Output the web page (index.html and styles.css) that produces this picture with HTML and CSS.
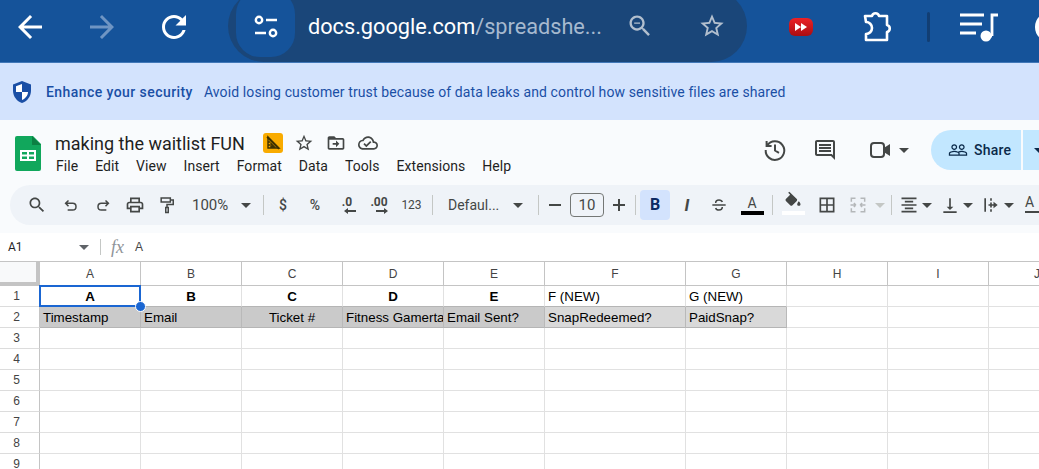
FILE: index.html
```html
<!DOCTYPE html>
<html lang="en">
<head>
    <meta charset="UTF-8">
    <meta name="viewport" content="width=device-width, initial-scale=1.0">
    <title>making the waitlist FUN</title>
    <link rel="stylesheet" href="styles.css">
</head>
<body>
    <!-- Browser bar -->
    <div class="browser-bar">
        <svg class="nav-icon" viewBox="0 0 24 24"><path d="M20 11H7.83l5.59-5.59L12 4l-8 8 8 8 1.41-1.41L7.83 13H20v-2z"/></svg>
        <svg class="nav-icon nav-off" viewBox="0 0 24 24"><path d="M12 4l-1.41 1.41L16.17 11H4v2h12.17l-5.58 5.59L12 20l8-8z"/></svg>
        <svg class="nav-icon" viewBox="0 0 24 24"><path d="M17.65 6.35C16.2 4.9 14.21 4 12 4c-4.42 0-7.99 3.58-7.99 8s3.57 8 7.99 8c3.73 0 6.84-2.55 7.73-6h-2.08c-.82 2.33-3.04 4-5.65 4-3.31 0-6-2.69-6-6s2.69-6 6-6c1.66 0 3.14.69 4.22 1.78L13 11h7V4l-2.35 2.35z"/></svg>
        <div class="omnibox">
            <div class="site-chip">
                <svg width="28" height="28" viewBox="0 0 28 28" fill="none" stroke="#fff" stroke-width="2.4"><circle cx="7" cy="7" r="3.2"/><path d="M14 7h11M3 20h11"/><circle cx="21" cy="20" r="3.2"/></svg>
            </div>
            <div class="url"><span class="url-host">docs.google.com</span>/spreadshe...</div>
            <svg class="omni-icon zoom-out" viewBox="0 0 24 24"><path d="M15.5 14h-.79l-.28-.27C15.41 12.59 16 11.11 16 9.5 16 5.91 13.09 3 9.5 3S3 5.91 3 9.5 5.91 16 9.5 16c1.61 0 3.09-.59 4.23-1.57l.27.28v.79l5 4.99L20.49 19l-4.99-5zm-6 0C7.01 14 5 11.99 5 9.5S7.01 5 9.5 5 14 7.01 14 9.5 11.99 14 9.5 14zM7 9h5v1H7z"/></svg>
            <svg class="omni-icon" viewBox="0 0 24 24"><path d="M22 9.24l-7.19-.62L12 2 9.19 8.63 2 9.24l5.46 4.73L5.82 21 12 17.27 18.18 21l-1.63-7.03L22 9.24zM12 15.4l-3.76 2.27 1-4.28-3.32-2.88 4.38-.38L12 6.1l1.71 4.04 4.38.38-3.32 2.88 1 4.28L12 15.4z"/></svg>
        </div>
        <div class="ext-ff">
            <svg width="12" height="8" viewBox="0 0 12 8" fill="#fff"><path d="M0 0l6 4-6 4zM6 0l6 4-6 4z"/></svg>
        </div>
        <svg class="ext-puzzle" width="32" height="32" viewBox="0 0 32 32" fill="none" stroke="#fff" stroke-width="2.6" stroke-linejoin="round"><path d="M5 5h7a3.6 3.6 0 0 1 7 0h8v9a3.6 3.6 0 0 1 0 7v8H6v-6a4.5 4.5 0 0 0 0-12z"/></svg>
        <div class="bar-divider"></div>
        <svg class="ext-music" width="38" height="30" viewBox="0 0 38 30" fill="none" stroke="#fff" stroke-width="2.8"><path d="M0 3h24M0 12h22M0 21h16M32 24V3h6"/><circle cx="26" cy="24" r="5.5" fill="#fff" stroke="none"/><path d="M28 24h4" /></svg>
        <div class="avatar"></div>
    </div>

    <!-- Security banner -->
    <div class="banner">
        <svg width="20" height="22" viewBox="0 0 20 22"><path fill="#1a4fa5" d="M10 0L1 3.5v6.2C1 15.2 4.8 20.4 10 22c5.2-1.6 9-6.8 9-12.3V3.5z"/><path fill="#fff" d="M10 3L4 5.3V11h6zM10 11v8c3.3-1.3 6-4.5 6-8z"/></svg>
        <span class="banner-title">Enhance your security</span>
        <span class="banner-text">Avoid losing customer trust because of data leaks and control how sensitive files are shared</span>
    </div>

    <!-- Docs header -->
    <div class="doc-head">
        <svg class="sheets-logo" width="26" height="35" viewBox="0 0 26 35"><path fill="#11a75c" d="M2 0h16l8 8v25a2 2 0 0 1-2 2H2a2 2 0 0 1-2-2V2a2 2 0 0 1 2-2z"/><path fill="#0c8043" d="M17 0l9 9h-9z"/><path fill="#fff" d="M5 14h16v11H5zm2 2v2.5h5V16zm7 0v2.5h5V16zm-7 4.5V23h5v-2.5zm7 0V23h5v-2.5z" fill-rule="evenodd"/></svg>
        <div class="doc-titles">
            <div class="title-row">
                <span class="doc-title">making the waitlist FUN</span>
                <span class="badge">
                    <svg width="16" height="16" viewBox="0 0 16 16" fill="none" stroke="#3c3000" stroke-width="1.4"><path d="M3 2v11h11zM3 7h2M3 10h2M6 8.5v3h3z"/><path d="M2 2l12 12" stroke-width="1.6"/></svg>
                </span>
                <svg class="head-icon" viewBox="0 0 24 24"><path d="M22 9.24l-7.19-.62L12 2 9.19 8.63 2 9.24l5.46 4.73L5.82 21 12 17.27 18.18 21l-1.63-7.03L22 9.24zM12 15.4l-3.76 2.27 1-4.28-3.32-2.88 4.38-.38L12 6.1l1.71 4.04 4.38.38-3.32 2.88 1 4.28L12 15.4z"/></svg>
                <svg class="head-icon" viewBox="0 0 24 24"><path d="M20 6h-8l-2-2H4c-1.1 0-2 .9-2 2v12c0 1.1.9 2 2 2h16c1.1 0 2-.9 2-2V8c0-1.1-.9-2-2-2zm0 12H4V8h16v10z"/><path d="M12 9l4 4-4 4v-3H8v-2h4z"/></svg>
                <svg class="head-icon" viewBox="0 0 24 24"><path d="M19.35 10.04C18.67 6.59 15.64 4 12 4 9.11 4 6.6 5.64 5.35 8.04 2.34 8.36 0 10.91 0 14c0 3.31 2.69 6 6 6h13c2.76 0 5-2.24 5-5 0-2.64-2.05-4.78-4.65-4.96zM19 18H6c-2.21 0-4-1.79-4-4 0-2.05 1.53-3.76 3.56-3.97l1.07-.11.5-.95C8.08 7.14 9.94 6 12 6c2.62 0 4.88 1.86 5.39 4.43l.3 1.5 1.53.11c1.56.1 2.78 1.41 2.78 2.96 0 1.65-1.35 3-3 3zm-9-3.82l-2.09-2.09L6.5 13.5 10 17l6.01-6.01-1.41-1.41z"/></svg>
            </div>
            <div class="menu">
                <span>File</span><span>Edit</span><span>View</span><span>Insert</span><span>Format</span><span>Data</span><span>Tools</span><span>Extensions</span><span>Help</span>
            </div>
        </div>
        <div class="head-actions">
            <svg class="action-icon stroke-icon" viewBox="0 0 24 24"><path d="M4.2 7.500A9.300 9.300 0 1 1 2.700 12M3.600 3v5h5M12 6.500v6l4 2.300"/></svg>
            <svg class="action-icon comment-icon" viewBox="0 0 24 24"><path d="M21.99 4c0-1.1-.89-2-1.99-2H4c-1.1 0-2 .9-2 2v12c0 1.1.9 2 2 2h14l4 4-.01-18zM20 4v13.17L18.83 16H4V4h16zM6 12h12v2H6zm0-3h12v2H6zm0-3h12v2H6z"/></svg>
            <svg class="action-icon meet-icon" viewBox="0 0 24 24"><rect class="meet-body" x="3" y="5" width="13" height="14" rx="3"/><path d="M15 10.500L22 6v12l-7-4.500z"/></svg>
            <span class="caret meet-caret"></span>
            <div class="share">
                <div class="share-main">
                    <svg width="20" height="20" viewBox="0 0 24 24" fill="#0b2a4a"><path d="M16.5 13c-1.2 0-3.07.34-4.5 1-1.43-.67-3.3-1-4.5-1C5.33 13 1 14.08 1 16.25V19h22v-2.75c0-2.17-4.33-3.25-6.5-3.25zm-4 4.5h-10v-1.25c0-.54 2.56-1.75 5-1.75s5 1.21 5 1.75v1.25zm9 0H14v-1.25c0-.46-.2-.86-.52-1.22.88-.3 1.96-.53 3.02-.53 2.44 0 5 1.21 5 1.75v1.25zM7.5 12c1.93 0 3.5-1.57 3.5-3.5S9.43 5 7.5 5 4 6.57 4 8.5 5.57 12 7.5 12zm0-5.500c1.100 0 2 .9 2 2s-.9 2-2 2-2-.9-2-2 .9-2 2-2zm9 5.500c1.930 0 3.500-1.570 3.500-3.500S18.430 5 16.500 5 13 6.570 13 8.500s1.570 3.500 3.500 3.500zm0-5.500c1.100 0 2 .9 2 2s-.9 2-2 2-2-.9-2-2 .9-2 2-2z"/></svg>
                    <span>Share</span>
                </div>
                <div class="share-more"><span class="caret caret-dark"></span></div>
            </div>
        </div>
    </div>

    <!-- Toolbar -->
    <div class="toolbar-wrap">
        <div class="toolbar">
            <div class="tb tb-search"><svg viewBox="0 0 24 24"><path d="M15.5 14h-.79l-.28-.27C15.41 12.59 16 11.11 16 9.5 16 5.91 13.09 3 9.5 3S3 5.91 3 9.5 5.91 16 9.5 16c1.61 0 3.09-.59 4.23-1.57l.27.28v.79l5 4.99L20.49 19l-4.99-5zm-6 0C7.01 14 5 11.99 5 9.5S7.01 5 9.5 5 14 7.01 14 9.5 11.99 14 9.5 14z"/></svg></div>
            <div class="tb"><svg viewBox="0 0 24 24" class="line"><path d="M9 6.5L5.5 10 9 13.5M6 10h8a4 4 0 0 1 0 8H8"/></svg></div>
            <div class="tb"><svg viewBox="0 0 24 24" class="line"><path d="M15 6.5l3.5 3.5-3.5 3.5M18 10h-8a4 4 0 0 0 0 8h6"/></svg></div>
            <div class="tb"><svg viewBox="0 0 24 24"><path d="M19 8h-1V3H6v5H5c-1.66 0-3 1.34-3 3v6h4v4h12v-4h4v-6c0-1.66-1.34-3-3-3zM8 5h8v3H8V5zm8 14H8v-4h8v4zm2-4v-2H6v2H4v-4c0-.55.45-1 1-1h14c.55 0 1 .45 1 1v4h-2z"/></svg></div>
            <div class="tb"><svg viewBox="0 0 24 24" class="line"><path d="M5 3.5h11v5H5zM16 6h3.5v5.5H12V15M10.5 15h3v6h-3z"/></svg></div>
            <div class="tb-select tb-zoom"><span>100%</span><span class="caret"></span></div>
            <div class="sep sep-zoom"></div>
            <div class="tb tb-text">$</div>
            <div class="tb tb-text">%</div>
            <div class="tb tb-decimal"><span>.0</span><svg width="12" height="6" viewBox="0 0 12 6"><path d="M4 0L0 3l4 3V4h8V2H4z"/></svg></div>
            <div class="tb tb-decimal"><span>.00</span><svg width="12" height="6" viewBox="0 0 12 6"><path d="M8 0l4 3-4 3V4H0V2h8z"/></svg></div>
            <div class="tb tb-text tb-small">123</div>
            <div class="sep"></div>
            <div class="tb-select tb-font"><span>Defaul...</span><span class="caret"></span></div>
            <div class="sep"></div>
            <div class="tb-step"><svg width="12" height="12" viewBox="0 0 12 12"><path d="M0 5h12v2H0z"/></svg></div>
            <div class="size-box">10</div>
            <div class="tb-step"><svg width="12" height="12" viewBox="0 0 12 12"><path d="M5 0h2v5h5v2H7v5H5V7H0V5h5z"/></svg></div>
            <div class="sep"></div>
            <div class="tb-bold">B</div>
            <div class="tb tb-italic">I</div>
            <div class="tb"><svg viewBox="0 0 24 24" class="line"><path d="M4 12h16M8 9.5C8 7 10 6 12 6s3.5.8 4 2.5M16 14.5c0 2.5-2 3.5-4 3.5s-3.5-.8-4-2.5"/></svg></div>
            <div class="tb tb-letter tb-color"><span>A</span><i class="swatch swatch-black"></i></div>
            <div class="sep"></div>
            <div class="tb tb-letter tb-fill"><svg width="18" height="16" viewBox="0 0 24 20"><path d="M16.56 8.94L7.62 0 6.21 1.41l2.38 2.38-5.15 5.15c-.59.59-.59 1.54 0 2.12l5.5 5.5c.29.29.68.44 1.06.44s.77-.15 1.06-.44l5.5-5.5c.59-.58.59-1.53 0-2.12z"/><path d="M19 11.5s-2 2.17-2 3.5c0 1.1.9 2 2 2s2-.9 2-2c0-1.33-2-3.5-2-3.5z"/></svg><i class="swatch swatch-white"></i></div>
            <div class="tb tb-borders"><svg viewBox="0 0 24 24"><path d="M3 3v18h18V3H3zm8 16H5v-6h6v6zm0-8H5V5h6v6zm8 8h-6v-6h6v6zm0-8h-6V5h6v6z"/></svg></div>
            <div class="tb tb-merge"><svg viewBox="0 0 24 24" fill="none"><path d="M4 8V4h5M4 16v4h5M20 8V4h-5M20 16v4h-5M3 12h6M9.5 12L7 9.5M9.5 12L7 14.5M21 12h-6M14.5 12L17 9.5M14.5 12l2.5 2.5"/></svg></div>
            <span class="caret caret-off"></span>
            <div class="sep"></div>
            <div class="tb-pick">
                <svg viewBox="0 0 24 24"><path d="M7 15v2h10v-2H7zm-4 6h18v-2H3v2zm0-8h18v-2H3v2zm4-6v2h10V7H7zM3 3v2h18V3H3z"/></svg>
                <span class="caret"></span>
            </div>
            <div class="tb-pick">
                <svg viewBox="0 0 24 24"><path d="M11 4h2v10h3l-4 4-4-4h3zM4 19.5h16v2H4z"/></svg>
                <span class="caret"></span>
            </div>
            <div class="tb-pick">
                <svg viewBox="0 0 24 24"><path d="M4 4h2v16H4zM11 4h2v3h-2zM11 9h2v2h-2zM11 13h2v2h-2zM11 17h2v3h-2zM15 8l5 4-5 4v-3H9v-2h6z"/></svg>
                <span class="caret"></span>
            </div>
            <div class="tb-rotate"><span>A</span><svg width="20" height="6" viewBox="0 0 20 6"><path d="M0 2h15V0l5 3-5 3V4H0z"/></svg></div>
        </div>
    </div>

    <!-- Formula bar -->
    <div class="formula-bar">
        <span class="name-box">A1</span>
        <span class="caret name-caret"></span>
        <div class="formula-sep"></div>
        <span class="fx">fx</span>
        <span class="formula-value">A</span>
    </div>

    <!-- Sheet grid -->
    <div class="sheet">
        <table>
            <colgroup>
                <col class="col-rows"><col><col><col><col><col><col class="col-wide"><col><col><col><col>
            </colgroup>
            <tr class="col-heads">
                <th class="corner"></th><th>A</th><th>B</th><th>C</th><th>D</th><th>E</th><th>F</th><th>G</th><th>H</th><th>I</th><th>J</th>
            </tr>
            <tr class="row-one">
                <th>1</th>
                <td class="head-cell selected">A<div class="sel-box"></div><div class="sel-handle"></div></td>
                <td class="head-cell">B</td>
                <td class="head-cell">C</td>
                <td class="head-cell">D</td>
                <td class="head-cell">E</td>
                <td class="edge">F (NEW)</td>
                <td class="edge">G (NEW)</td>
                <td></td><td></td><td></td>
            </tr>
            <tr class="row-two">
                <th>2</th>
                <td class="dark">Timestamp</td>
                <td class="dark">Email</td>
                <td class="dark center">Ticket #</td>
                <td class="dark tight">Fitness Gamerta</td>
                <td class="dark">Email Sent?</td>
                <td class="light">SnapRedeemed?</td>
                <td class="light">PaidSnap?</td>
                <td></td><td></td><td></td>
            </tr>
            <tr><th>3</th><td></td><td></td><td></td><td></td><td></td><td></td><td></td><td></td><td></td><td></td></tr>
            <tr><th>4</th><td></td><td></td><td></td><td></td><td></td><td></td><td></td><td></td><td></td><td></td></tr>
            <tr><th>5</th><td></td><td></td><td></td><td></td><td></td><td></td><td></td><td></td><td></td><td></td></tr>
            <tr><th>6</th><td></td><td></td><td></td><td></td><td></td><td></td><td></td><td></td><td></td><td></td></tr>
            <tr><th>7</th><td></td><td></td><td></td><td></td><td></td><td></td><td></td><td></td><td></td><td></td></tr>
            <tr><th>8</th><td></td><td></td><td></td><td></td><td></td><td></td><td></td><td></td><td></td><td></td></tr>
            <tr><th>9</th><td></td><td></td><td></td><td></td><td></td><td></td><td></td><td></td><td></td><td></td></tr>
        </table>
    </div>
</body>
</html>
```

FILE: styles.css
```css
* {
    box-sizing: border-box;
}

html, body {
    height: 100%;
}

body {
    margin: 0;
    overflow: hidden;
    background-color: #fff;
    font-family: Roboto, "Liberation Sans", sans-serif;
    color: #444746;
}

svg {
    flex: none;
    display: block;
}

.caret {
    flex: none;
    width: 0;
    height: 0;
    border-left: 5px solid transparent;
    border-right: 5px solid transparent;
    border-top: 5px solid #444746;
}

/* Browser bar */
.browser-bar {
    display: flex;
    align-items: center;
    gap: 36px;
    height: 63px;
    padding-left: 12px;
    background-color: #15539a;
    border-bottom: 1px solid #4178b8;
    overflow: hidden;
}

.nav-icon {
    width: 36px;
    height: 36px;
    margin-top: -9px;
    fill: #fff;
}

.nav-off {
    fill: #6f95c3;
}

.omnibox {
    flex: none;
    align-self: flex-start;
    display: flex;
    align-items: center;
    width: 519px;
    height: 72px;
    margin-top: -10px;
    padding-left: 8px;
    border-radius: 36px;
    background-color: #1a4679;
}

.site-chip {
    flex: none;
    display: flex;
    justify-content: center;
    align-items: center;
    align-self: flex-start;
    width: 59px;
    height: 67px;
    padding-top: 6px;
    border-radius: 24px;
    background-color: #15539a;
}

.url {
    flex: none;
    width: 318px;
    margin-left: 13px;
    font-size: 21.7px;
    color: #a6b9cf;
    white-space: nowrap;
}

.url-host {
    color: #fff;
}

.omni-icon {
    width: 28px;
    height: 28px;
    fill: #b2bfce;
}

.zoom-out {
    margin-right: 44px;
}

.ext-ff {
    flex: none;
    display: flex;
    justify-content: center;
    align-items: center;
    width: 24px;
    height: 18px;
    margin-left: 6px;
    margin-top: -9px;
    border-radius: 6px;
    background: linear-gradient(#ec2126, #a90d12);
}

.ext-puzzle {
    margin-left: 11px;
    margin-top: -9px;
}

.bar-divider {
    flex: none;
    width: 3px;
    height: 30px;
    margin-left: -1px;
    margin-top: -9px;
    border-radius: 2px;
    background-color: #123e73;
}

.ext-music {
    margin-left: -6px;
    margin-top: -9px;
}

.avatar {
    flex: none;
    width: 30px;
    height: 30px;
    margin-left: 1px;
    margin-top: -9px;
    border-radius: 50%;
    background-color: #fff;
}

/* Security banner */
.banner {
    display: flex;
    align-items: center;
    height: 57px;
    padding-left: 12px;
    background-color: #d3e3fd;
    font-size: 14px;
    color: #1a4fa5;
}

.banner-title {
    margin-left: 14px;
    font-weight: 500;
    letter-spacing: 0.43px;
}

.banner-text {
    margin-left: 11px;
    letter-spacing: 0.11px;
}

/* Docs header */
.doc-head {
    display: flex;
    height: 65px;
    padding: 16px 0 0 15px;
    background-color: #f9fbfd;
}

.doc-titles {
    margin-left: 14px;
    margin-top: -5px;
}

.title-row {
    display: flex;
    align-items: center;
    height: 24px;
}

.doc-title {
    font-size: 18px;
    color: #1f1f1f;
}

.badge {
    display: flex;
    justify-content: center;
    align-items: center;
    width: 20px;
    height: 20px;
    margin-left: 18px;
    margin-right: 11px;
    border-radius: 3px;
    background-color: #f9ab00;
}

.head-icon {
    width: 20px;
    height: 20px;
    margin-right: 12px;
    fill: #444746;
}

.menu {
    display: flex;
    gap: 17px;
    margin-top: 3px;
    margin-left: 1px;
    font-size: 14px;
    letter-spacing: 0.05px;
    color: #1f1f1f;
}

.head-actions {
    display: flex;
    align-items: center;
    align-self: flex-start;
    height: 40px;
    margin-left: auto;
    margin-top: -6px;
}

.action-icon {
    width: 24px;
    height: 24px;
    margin-right: 26px;
    fill: #444746;
}

.stroke-icon {
    fill: none;
    stroke: #444746;
    stroke-width: 2;
}

.comment-icon {
    margin-right: 31px;
}

.meet-icon {
    margin-right: 7px;
}

.meet-body {
    fill: none;
    stroke: #444746;
    stroke-width: 2;
}

.meet-caret {
    margin-right: 22px;
}

.share {
    flex: none;
    display: flex;
    gap: 2px;
    width: 108px;
    height: 40px;
    font-size: 14px;
    font-weight: 500;
    letter-spacing: 0.2px;
    color: #0b2a4a;
}

.share-main {
    flex: none;
    display: flex;
    align-items: center;
    gap: 6px;
    width: 90px;
    padding-left: 17px;
    border-radius: 20px 0 0 20px;
    background-color: #c2e7ff;
}

.share-more {
    flex: 1;
    display: flex;
    align-items: center;
    padding-left: 11px;
    overflow: hidden;
    background-color: #c2e7ff;
}

.caret-dark {
    border-top-color: #0b2a4a;
}

/* Toolbar */
.toolbar-wrap {
    height: 48px;
    padding: 0 0 8px 10px;
    background-color: #f9fbfd;
}

.toolbar {
    display: flex;
    align-items: center;
    height: 40px;
    padding-left: 11px;
    border-radius: 20px 0 0 20px;
    background-color: #eff3f8;
    overflow: hidden;
}

.tb {
    flex: none;
    display: flex;
    flex-direction: column;
    justify-content: center;
    align-items: center;
    width: 32px;
    height: 30px;
}

.tb svg {
    width: 20px;
    height: 20px;
    fill: #444746;
}

.tb svg.line,
.tb-merge svg {
    fill: none;
    stroke: #444746;
    stroke-width: 1.8;
}

.tb-search {
    margin-right: 2px;
}

.tb-select {
    flex: none;
    display: flex;
    align-items: center;
    justify-content: space-between;
    height: 30px;
    font-size: 14px;
}

.tb-zoom {
    width: 71px;
    padding: 0 3px 0 9px;
    font-size: 15px;
}

.tb-font {
    width: 97px;
    padding: 0 11px;
}

.sep {
    flex: none;
    width: 1px;
    height: 20px;
    margin: 0 4px;
    background-color: #c4c7c5;
}

.sep-zoom {
    margin: 0 3px 0 9px;
}

.tb-text {
    font-size: 14px;
    font-weight: 500;
}

.tb-small {
    width: 33px;
    font-size: 12px;
    font-weight: 400;
}

.tb-decimal {
    font-size: 12px;
    font-weight: 700;
    line-height: 12px;
}

.tb-decimal svg {
    width: 12px;
    height: 6px;
    margin-left: 6px;
}

.tb-step {
    flex: none;
    display: flex;
    justify-content: center;
    align-items: center;
    width: 24px;
    height: 24px;
    fill: #444746;
}

.size-box {
    flex: none;
    width: 34px;
    height: 24px;
    margin: 0 3px;
    border: 1px solid #747775;
    border-radius: 4px;
    font-size: 15px;
    line-height: 22px;
    text-align: center;
}

.tb-bold {
    flex: none;
    width: 30px;
    height: 30px;
    border-radius: 4px;
    background-color: #d3e3fd;
    color: #0b2a63;
    font-size: 16px;
    font-weight: 700;
    line-height: 30px;
    text-align: center;
}

.tb-italic {
    margin-left: 1px;
    font-size: 17px;
    font-weight: 700;
    font-style: italic;
}

.tb-letter {
    position: relative;
    font-size: 14px;
}

.tb-color {
    margin-left: 1px;
    padding-bottom: 4px;
}

.tb-fill {
    padding-bottom: 10px;
}

.swatch {
    position: absolute;
    left: 5px;
    bottom: 5px;
    width: 23px;
    height: 4px;
}

.swatch-black {
    background-color: #000;
}

.swatch-white {
    background-color: #fff;
}

.tb-borders {
    margin-left: 2px;
}

.tb-merge {
    width: 30px;
}

.tb-merge svg {
    stroke: #b4b7b9;
}

.caret-off {
    margin: 0 2px;
    border-top-color: #c4c7c5;
}

.tb-pick {
    flex: none;
    display: flex;
    align-items: center;
    width: 36px;
    margin-right: 5px;
}

.tb-pick svg {
    width: 20px;
    height: 20px;
    margin: 0 3px;
    fill: #444746;
}

.tb-rotate {
    flex: none;
    display: flex;
    flex-direction: column;
    width: 24px;
    padding-left: 6px;
    fill: #444746;
    font-size: 14px;
    line-height: 14px;
}

/* Formula bar */
.formula-bar {
    display: flex;
    align-items: center;
    height: 29px;
    padding-left: 8px;
    border-bottom: 1px solid #c4c4c4;
    font-size: 12px;
    color: #1f1f1f;
}

.name-box {
    width: 71px;
}

.name-caret {
    border-top-color: #5f6368;
}

.formula-sep {
    width: 1px;
    height: 16px;
    margin: 0 10px 0 11px;
    background-color: #c4c7c5;
}

.fx {
    width: 24px;
    font-family: "Liberation Serif", serif;
    font-size: 18px;
    font-style: italic;
    color: #8f9499;
}

.formula-value {
    font-family: "Liberation Sans", sans-serif;
    color: #444;
}

/* Sheet grid */
.sheet {
    overflow: hidden;
}

table {
    width: 1090px;
    table-layout: fixed;
    border-collapse: separate;
    border-spacing: 0;
    font-family: "Liberation Sans", Arial, sans-serif;
    font-size: 13.33px;
    color: #000;
}

.col-rows {
    width: 40px;
}

col {
    width: 101px;
}

.col-wide {
    width: 141px;
}

tr {
    height: 21px;
}

th, td {
    height: 21px;
    padding: 0 3px;
    border-right: 1px solid #e1e1e1;
    border-bottom: 1px solid #e1e1e1;
    white-space: nowrap;
    overflow: hidden;
}

th {
    padding: 0 6px 0 0;
    background-color: #fff;
    font-size: 12px;
    font-weight: 400;
    color: #444;
    text-align: center;
}

tr th:first-child {
    border-right: 1px solid #c4c4c4;
    border-bottom-color: #dcdcdc;
}

.col-heads,
.col-heads th {
    height: 24px;
}

.col-heads th {
    padding: 0;
    border-right-color: #c4c4c4;
    border-bottom-color: #c4c4c4;
}

.col-heads th:last-child {
    padding-right: 4px;
}

.col-heads th.corner {
    border-right: 4px solid #c4c4c4;
    border-bottom: 4px solid #c4c4c4;
    background-color: #f8f9fa;
}

.head-cell {
    font-weight: 700;
    text-align: center;
    border-bottom-color: #b5b5b5;
}

.edge {
    border-bottom-color: #b5b5b5;
}

.row-one th {
    border-bottom-color: #c4c4c4;
}

.selected {
    position: relative;
    overflow: visible;
}

.sel-box {
    position: absolute;
    top: -1px;
    left: -1px;
    right: -1px;
    bottom: -1px;
    border: 2px solid #1a66d2;
}

.sel-handle {
    position: absolute;
    right: -6px;
    bottom: -6px;
    width: 11px;
    height: 11px;
    border-radius: 50%;
    border: 1px solid #fff;
    background-color: #1a66d2;
    z-index: 2;
}

.dark, .light {
    border-right-color: #b9b9b9;
    border-bottom-color: #b5b5b5;
}

.dark {
    background-color: #cacaca;
}

.light {
    background-color: #d9d9d9;
}

.tight {
    padding-right: 0;
}

.center {
    text-align: center;
}
```
